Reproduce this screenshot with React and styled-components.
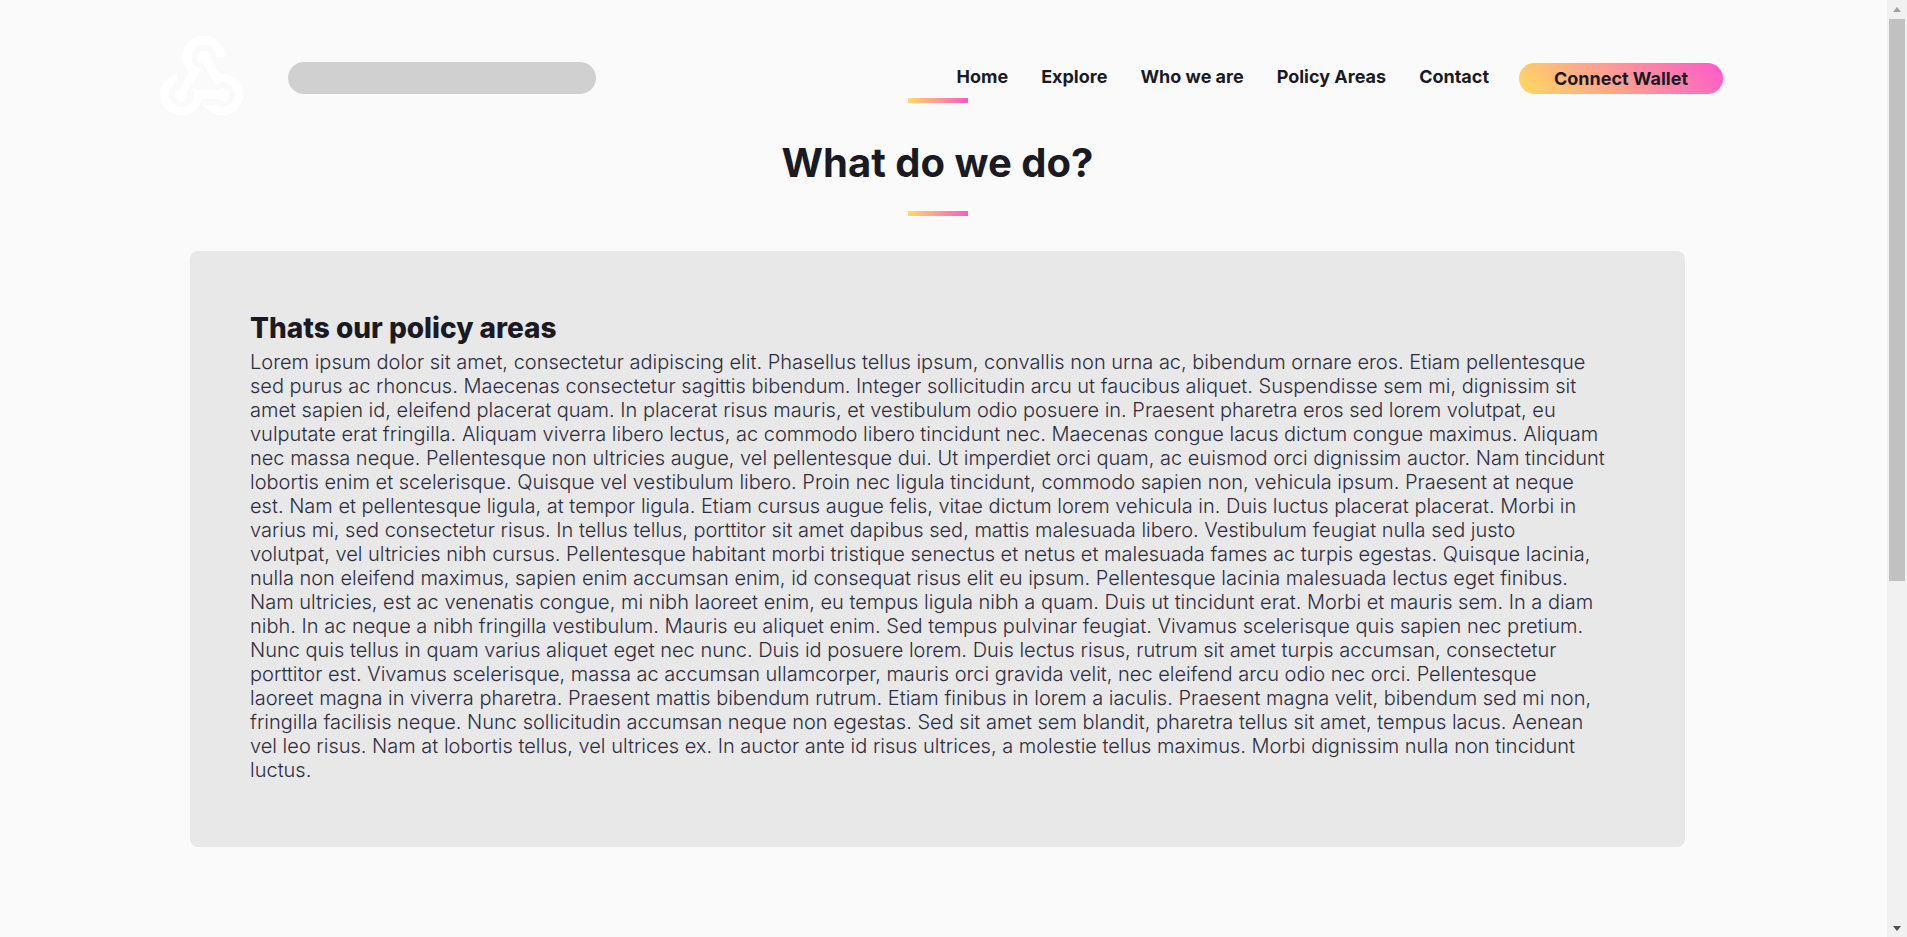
import React from "react";
import styled, { createGlobalStyle } from "styled-components";

const GlobalStyle = createGlobalStyle`
  *, *::before, *::after { box-sizing: border-box; }
  body {
    margin: 0;
    background: #fafafa;
    color: #1a1a24;
    font-family: Inter, "Liberation Sans", sans-serif;
  }
`;

const Shell = styled.div`
  display: flex;
  min-height: 100vh;
`;

const Page = styled.div`
  position: relative;
  flex: 1;
  min-width: 0;
  padding-right: 12px;
`;

const Header = styled.header`
  position: absolute;
  top: 28px;
  left: 0;
  right: 12px;
  display: flex;
  align-items: center;
  justify-content: space-between;
  height: 100px;
  padding: 0 152px 0 160px;
`;

const Brand = styled.div`
  display: flex;
  align-items: center;
  gap: 44px;
`;

const LogoLink = styled.a`
  display: flex;
  padding-bottom: 4px;
  color: #ffffff;
`;

const LogoMark = styled.svg`
  width: 84px;
  height: 80px;
  fill: currentColor;
`;

const SearchInput = styled.input`
  width: 308px;
  height: 32px;
  padding: 0 16px;
  border: 0;
  border-radius: 16px;
  background: #d0d0d0;
  font: inherit;
`;

const Nav = styled.nav`
  display: flex;
  align-items: center;
  gap: 33px;
  margin-right: 30px;
`;

const NavLink = styled.a`
  color: inherit;
  font-size: 18px;
  font-weight: 700;
  line-height: 22px;
  padding-bottom: 2px;
  text-decoration: none;
  white-space: nowrap;
`;

const Actions = styled.div`
  display: flex;
  align-items: center;
`;

const WalletButton = styled.button`
  width: 204px;
  height: 31px;
  padding: 0;
  border: 0;
  border-radius: 16px;
  background: linear-gradient(45deg, #ffdb5f, #ff58cc);
  color: inherit;
  font-family: inherit;
  font-size: 18px;
  font-weight: 700;
  cursor: pointer;
`;

const Content = styled.main`
  padding: 98px 190px 90px;
`;

const TitleBlock = styled.div`
  display: flex;
  flex-direction: column;
  align-items: center;
  margin-bottom: 35px;
`;

const Accent = styled.span`
  width: 60px;
  height: 5px;
  background: linear-gradient(90deg, #ffdb5f, #ff58cc);
`;

const Title = styled.h1`
  margin: 36px 0 24px;
  font-size: 40px;
  font-weight: 700;
  line-height: 48px;
`;

const Card = styled.section`
  padding: 60px;
  border-radius: 8px;
  background: #e8e8e8;
`;

const CardTitle = styled.h2`
  margin: 0;
  font-size: 28px;
  font-weight: 800;
  line-height: 34px;
`;

const CardText = styled.p`
  margin: 5px 0;
  color: #2d2d3f;
  font-size: 20px;
  font-weight: 350;
  line-height: 24px;
`;

const Scrollbar = styled.div`
  position: sticky;
  top: 0;
  display: flex;
  flex-direction: column;
  align-items: center;
  width: 20px;
  height: 100vh;
  background: #f1f1f1;
`;

const ScrollArrow = styled.svg`
  flex: none;
  width: 20px;
  height: 19px;
  fill: ${(p) => p.$color};
`;

const ScrollTrack = styled.div`
  flex: 1;
  width: 16px;
`;

const ScrollThumb = styled.div`
  height: 62.5%;
  background: #c1c1c1;
`;

const links = ["Home", "Explore", "Who we are", "Policy Areas", "Contact"];

const lines = [
  "Lorem ipsum dolor sit amet, consectetur adipiscing elit. Phasellus tellus ipsum, convallis non urna ac, bibendum ornare eros. Etiam pellentesque",
  "sed purus ac rhoncus. Maecenas consectetur sagittis bibendum. Integer sollicitudin arcu ut faucibus aliquet. Suspendisse sem mi, dignissim sit",
  "amet sapien id, eleifend placerat quam. In placerat risus mauris, et vestibulum odio posuere in. Praesent pharetra eros sed lorem volutpat, eu",
  "vulputate erat fringilla. Aliquam viverra libero lectus, ac commodo libero tincidunt nec. Maecenas congue lacus dictum congue maximus. Aliquam",
  "nec massa neque. Pellentesque non ultricies augue, vel pellentesque dui. Ut imperdiet orci quam, ac euismod orci dignissim auctor. Nam tincidunt",
  "lobortis enim et scelerisque. Quisque vel vestibulum libero. Proin nec ligula tincidunt, commodo sapien non, vehicula ipsum. Praesent at neque",
  "est. Nam et pellentesque ligula, at tempor ligula. Etiam cursus augue felis, vitae dictum lorem vehicula in. Duis luctus placerat placerat. Morbi in",
  "varius mi, sed consectetur risus. In tellus tellus, porttitor sit amet dapibus sed, mattis malesuada libero. Vestibulum feugiat nulla sed justo",
  "volutpat, vel ultricies nibh cursus. Pellentesque habitant morbi tristique senectus et netus et malesuada fames ac turpis egestas. Quisque lacinia,",
  "nulla non eleifend maximus, sapien enim accumsan enim, id consequat risus elit eu ipsum. Pellentesque lacinia malesuada lectus eget finibus.",
  "Nam ultricies, est ac venenatis congue, mi nibh laoreet enim, eu tempus ligula nibh a quam. Duis ut tincidunt erat. Morbi et mauris sem. In a diam",
  "nibh. In ac neque a nibh fringilla vestibulum. Mauris eu aliquet enim. Sed tempus pulvinar feugiat. Vivamus scelerisque quis sapien nec pretium.",
  "Nunc quis tellus in quam varius aliquet eget nec nunc. Duis id posuere lorem. Duis lectus risus, rutrum sit amet turpis accumsan, consectetur",
  "porttitor est. Vivamus scelerisque, massa ac accumsan ullamcorper, mauris orci gravida velit, nec eleifend arcu odio nec orci. Pellentesque",
  "laoreet magna in viverra pharetra. Praesent mattis bibendum rutrum. Etiam finibus in lorem a iaculis. Praesent magna velit, bibendum sed mi non,",
  "fringilla facilisis neque. Nunc sollicitudin accumsan neque non egestas. Sed sit amet sem blandit, pharetra tellus sit amet, tempus lacus. Aenean",
  "vel leo risus. Nam at lobortis tellus, vel ultrices ex. In auctor ante id risus ultrices, a molestie tellus maximus. Morbi dignissim nulla non tincidunt",
  "luctus.",
];

function Logo() {
  return (
    <LogoMark viewBox="62 47 252 241" aria-hidden="true">
      <path d="M257 111A64 64 0 1 0 150 157L121 205 143 216 185 147A37 37 0 1 1 231 111Z" />
      <path d="M190 131L229 193A37 37 0 1 1 232 255H195A63 63 0 1 0 241 161L212 113Z" />
      <path d="M113 162A63 63 0 1 0 187 237H237V210H162A38 38 0 1 1 113 188Z" />
      <circle cx="194" cy="111" r="19.5" />
      <circle cx="125" cy="224" r="19.5" />
      <circle cx="251" cy="224" r="19.5" />
    </LogoMark>
  );
}

export default function App() {
  return (
    <Shell>
      <GlobalStyle />
      <Page>
        <Header>
          <Brand>
            <LogoLink href="#" aria-label="Homepage">
              <Logo />
            </LogoLink>
            <SearchInput type="text" aria-label="Search" />
          </Brand>
          <Actions>
            <Nav>
              {links.map((label) => (
                <NavLink key={label} href="#">
                  {label}
                </NavLink>
              ))}
            </Nav>
            <WalletButton type="button">Connect Wallet</WalletButton>
          </Actions>
        </Header>
        <Content>
          <TitleBlock>
            <Accent />
            <Title>What do we do?</Title>
            <Accent />
          </TitleBlock>
          <Card>
            <CardTitle>Thats our policy areas</CardTitle>
            <CardText>
              {lines.map((line, i) => (
                <React.Fragment key={line}>
                  {i > 0 && <br />}
                  {line}
                </React.Fragment>
              ))}
            </CardText>
          </Card>
        </Content>
      </Page>
      <Scrollbar aria-hidden="true">
        <ScrollArrow $color="#a3a3a3" viewBox="0 0 20 19">
          <path d="M6 12h8l-4-5z" />
        </ScrollArrow>
        <ScrollTrack>
          <ScrollThumb />
        </ScrollTrack>
        <ScrollArrow $color="#505050" viewBox="0 0 20 19">
          <path d="M6 8h8l-4 5z" />
        </ScrollArrow>
      </Scrollbar>
    </Shell>
  );
}
